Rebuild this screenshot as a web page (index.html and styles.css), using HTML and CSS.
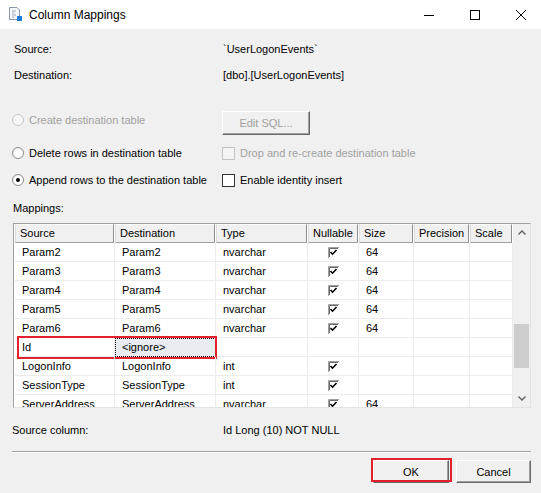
FILE: index.html
```html
<!DOCTYPE html>
<html lang="en">
<head>
  <meta charset="UTF-8">
  <meta name="viewport" content="width=device-width, initial-scale=1.0">
  <title>Column Mappings</title>
  <link rel="stylesheet" href="styles.css">
</head>
<body>
  <div class="titlebar">
    <svg class="app-icon" width="14" height="15" viewBox="0 0 14 15">
      <path d="M1.5 1.5h7.5l2.5 2.5v9.5h-10z" fill="#f5f7fa" stroke="#8797ad"/>
      <path d="M4 5h4M4 7h2.5M4 9h4M4 11h2.5" stroke="#9eabbd"/>
      <rect x="9" y="10" width="5" height="5" fill="#1f7bd8"/>
    </svg>
    <span class="title">Column Mappings</span>
    <div class="caption">
      <svg width="10" height="10" viewBox="0 0 10 10"><path d="M0 5.5h10" stroke="#000"/></svg>
      <svg width="10" height="10" viewBox="0 0 10 10"><rect x="0.5" y="0.5" width="9" height="9" fill="none" stroke="#000"/></svg>
      <svg width="10" height="10" viewBox="0 0 10 10"><path d="M0 0l10 10M10 0l-10 10" stroke="#000"/></svg>
    </div>
  </div>

  <div class="info">
    <span>Source:</span><span>`UserLogonEvents`</span>
    <span>Destination:</span><span>[dbo].[UserLogonEvents]</span>
  </div>

  <div class="options">
    <div class="opt disabled first"><span class="radio"></span>Create destination table</div>
    <div><button class="btn btn-sql" disabled>Edit SQL...</button></div>
    <div class="opt"><span class="radio"></span>Delete rows in destination table</div>
    <div class="opt disabled"><span class="check"></span>Drop and re-create destination table</div>
    <div class="opt"><span class="radio checked"></span>Append rows to the destination table</div>
    <div class="opt"><span class="check"></span>Enable identity insert</div>
  </div>

  <div class="section-label">Mappings:</div>
  <div class="grid">
    <div class="table">
      <div class="head">
        <div class="hcell">Source</div>
        <div class="hcell">Destination</div>
        <div class="hcell">Type</div>
        <div class="hcell">Nullable</div>
        <div class="hcell">Size</div>
        <div class="hcell">Precision</div>
        <div class="hcell">Scale</div>
      </div>
      <div class="row">
        <div class="cell">Param2</div><div class="cell">Param2</div><div class="cell">nvarchar</div>
        <div class="cell center"><svg class="cb" width="11" height="11" viewBox="0 0 11 11"><rect width="11" height="11" fill="#fff"/><path d="M0.5 11V0.5H11" fill="none" stroke="#a0a0a0"/><path d="M1.5 10V1.5H10" fill="none" stroke="#696969"/><path d="M2.5 5l2 2.2 4-4.2" fill="none" stroke="#000" stroke-width="1.6"/></svg></div>
        <div class="cell">64</div><div class="cell"></div><div class="cell"></div>
      </div>
      <div class="row">
        <div class="cell">Param3</div><div class="cell">Param3</div><div class="cell">nvarchar</div>
        <div class="cell center"><svg class="cb" width="11" height="11" viewBox="0 0 11 11"><rect width="11" height="11" fill="#fff"/><path d="M0.5 11V0.5H11" fill="none" stroke="#a0a0a0"/><path d="M1.5 10V1.5H10" fill="none" stroke="#696969"/><path d="M2.5 5l2 2.2 4-4.2" fill="none" stroke="#000" stroke-width="1.6"/></svg></div>
        <div class="cell">64</div><div class="cell"></div><div class="cell"></div>
      </div>
      <div class="row">
        <div class="cell">Param4</div><div class="cell">Param4</div><div class="cell">nvarchar</div>
        <div class="cell center"><svg class="cb" width="11" height="11" viewBox="0 0 11 11"><rect width="11" height="11" fill="#fff"/><path d="M0.5 11V0.5H11" fill="none" stroke="#a0a0a0"/><path d="M1.5 10V1.5H10" fill="none" stroke="#696969"/><path d="M2.5 5l2 2.2 4-4.2" fill="none" stroke="#000" stroke-width="1.6"/></svg></div>
        <div class="cell">64</div><div class="cell"></div><div class="cell"></div>
      </div>
      <div class="row">
        <div class="cell">Param5</div><div class="cell">Param5</div><div class="cell">nvarchar</div>
        <div class="cell center"><svg class="cb" width="11" height="11" viewBox="0 0 11 11"><rect width="11" height="11" fill="#fff"/><path d="M0.5 11V0.5H11" fill="none" stroke="#a0a0a0"/><path d="M1.5 10V1.5H10" fill="none" stroke="#696969"/><path d="M2.5 5l2 2.2 4-4.2" fill="none" stroke="#000" stroke-width="1.6"/></svg></div>
        <div class="cell">64</div><div class="cell"></div><div class="cell"></div>
      </div>
      <div class="row">
        <div class="cell">Param6</div><div class="cell">Param6</div><div class="cell">nvarchar</div>
        <div class="cell center"><svg class="cb" width="11" height="11" viewBox="0 0 11 11"><rect width="11" height="11" fill="#fff"/><path d="M0.5 11V0.5H11" fill="none" stroke="#a0a0a0"/><path d="M1.5 10V1.5H10" fill="none" stroke="#696969"/><path d="M2.5 5l2 2.2 4-4.2" fill="none" stroke="#000" stroke-width="1.6"/></svg></div>
        <div class="cell">64</div><div class="cell"></div><div class="cell"></div>
      </div>
      <div class="row marked">
        <div class="cell">Id</div><div class="cell focus">&lt;ignore&gt;</div><div class="cell"></div>
        <div class="cell"></div><div class="cell"></div><div class="cell"></div><div class="cell"></div>
        <span class="mark mark-row"></span>
      </div>
      <div class="row">
        <div class="cell">LogonInfo</div><div class="cell">LogonInfo</div><div class="cell">int</div>
        <div class="cell center"><svg class="cb" width="11" height="11" viewBox="0 0 11 11"><rect width="11" height="11" fill="#fff"/><path d="M0.5 11V0.5H11" fill="none" stroke="#a0a0a0"/><path d="M1.5 10V1.5H10" fill="none" stroke="#696969"/><path d="M2.5 5l2 2.2 4-4.2" fill="none" stroke="#000" stroke-width="1.6"/></svg></div>
        <div class="cell"></div><div class="cell"></div><div class="cell"></div>
      </div>
      <div class="row">
        <div class="cell">SessionType</div><div class="cell">SessionType</div><div class="cell">int</div>
        <div class="cell center"><svg class="cb" width="11" height="11" viewBox="0 0 11 11"><rect width="11" height="11" fill="#fff"/><path d="M0.5 11V0.5H11" fill="none" stroke="#a0a0a0"/><path d="M1.5 10V1.5H10" fill="none" stroke="#696969"/><path d="M2.5 5l2 2.2 4-4.2" fill="none" stroke="#000" stroke-width="1.6"/></svg></div>
        <div class="cell"></div><div class="cell"></div><div class="cell"></div>
      </div>
      <div class="row">
        <div class="cell">ServerAddress</div><div class="cell">ServerAddress</div><div class="cell">nvarchar</div>
        <div class="cell center"><svg class="cb" width="11" height="11" viewBox="0 0 11 11"><rect width="11" height="11" fill="#fff"/><path d="M0.5 11V0.5H11" fill="none" stroke="#a0a0a0"/><path d="M1.5 10V1.5H10" fill="none" stroke="#696969"/><path d="M2.5 5l2 2.2 4-4.2" fill="none" stroke="#000" stroke-width="1.6"/></svg></div>
        <div class="cell">64</div><div class="cell"></div><div class="cell"></div>
      </div>
    </div>
    <div class="scroll">
      <div class="arrow"><svg width="8" height="5" viewBox="0 0 8 5"><path d="M0.5 4.5l3.5-3.5 3.5 3.5" fill="none" stroke="#606060" stroke-width="1.4"/></svg></div>
      <div class="track"><div class="thumb"></div></div>
      <div class="arrow"><svg width="8" height="5" viewBox="0 0 8 5"><path d="M0.5 0.5l3.5 3.5 3.5-3.5" fill="none" stroke="#606060" stroke-width="1.4"/></svg></div>
    </div>
  </div>

  <div class="info source-col">
    <span>Source column:</span><span>Id Long (10) NOT NULL</span>
  </div>

  <div class="separator"></div>

  <div class="footer">
    <button class="btn btn-ok">OK<span class="mark"></span></button>
    <button class="btn btn-cancel">Cancel</button>
  </div>
</body>
</html>
```

FILE: styles.css
```css
body {
  margin: 0;
  width: 541px;
  height: 493px;
  overflow: hidden;
  background: #f0f0f0;
  color: #000;
  font-family: "Liberation Sans", Arial, sans-serif;
  font-size: 11px;
}
.titlebar {
  height: 29px;
  background: #fff;
  display: flex;
  align-items: center;
}
.app-icon {
  margin-left: 8px;
  margin-top: -2px;
}
.title {
  margin-left: 7px;
  font-size: 12px;
}
.caption {
  margin-left: auto;
  margin-right: 15px;
  display: flex;
  gap: 36px;
}
.info {
  display: grid;
  grid-template-columns: 209px auto;
  row-gap: 10px;
  line-height: 16px;
  padding-left: 14px;
  margin-top: 12px;
}
.options {
  display: grid;
  grid-template-columns: 210px auto;
  grid-template-rows: 25px 20px 20px;
  row-gap: 7px;
  margin: 28px 0 0 12px;
}
.opt {
  display: flex;
  align-items: center;
}
.opt.first {
  padding-bottom: 7px;
}
.opt.disabled {
  color: #a0a0a0;
}
.radio {
  width: 12px;
  height: 12px;
  box-sizing: border-box;
  border-radius: 50%;
  border: 1px solid #8c8c8c;
  background: radial-gradient(circle at 60% 60%, #fff 40%, #e6e6e6 100%);
  margin-right: 5px;
  display: flex;
  align-items: center;
  justify-content: center;
}
.disabled .radio {
  border-color: #c8c8c8;
  background: #f7f7f7;
}
.radio.checked::after {
  content: "";
  width: 4px;
  height: 4px;
  border-radius: 50%;
  background: #000;
}
.check {
  width: 13px;
  height: 13px;
  box-sizing: border-box;
  border: 1px solid #333;
  background: #fff;
  margin-right: 5px;
}
.disabled .check {
  border-color: #c2c2c2;
  background: #f4f4f4;
}
.btn {
  font-family: inherit;
  font-size: 11px;
  color: #000;
  height: 23px;
  padding: 0;
  box-sizing: border-box;
  background: #f0f0f0;
  border: 1px solid;
  border-color: #fff #696969 #696969 #fff;
  box-shadow: inset -1px -1px 0 #a0a0a0;
}
.btn-sql {
  width: 88px;
  height: 24px;
  color: #a0a0a0;
}
.section-label {
  margin: 10px 0 0 13px;
  line-height: 16px;
}
.grid {
  margin: 7px 0 0 13px;
  width: 518px;
  height: 185px;
  box-sizing: border-box;
  border: 1px solid;
  border-color: #a0a0a0 #e3e3e3 #e3e3e3 #a0a0a0;
  padding-left: 1px;
  background: #fff;
  display: flex;
}
.table {
  flex: 1;
  overflow: hidden;
}
.head, .row {
  display: grid;
  grid-template-columns: 100px 101px 92px 51px 55px 56px 43px;
}
.hcell {
  height: 19px;
  box-sizing: border-box;
  padding-left: 4px;
  line-height: 17px;
  background: #f0f0f0;
  border: 1px solid;
  border-color: #fcfcfc #8c8c8c #a0a0a0 #dcdcdc;
  margin-right: 1px;
}
.row {
  position: relative;
  height: 19px;
}
.cell {
  box-sizing: border-box;
  padding-left: 7px;
  line-height: 18px;
  border-right: 1px solid #ececec;
  border-bottom: 1px solid #ececec;
  white-space: nowrap;
  overflow: hidden;
}
.cell.center {
  padding-left: 0;
  display: flex;
  align-items: center;
  justify-content: center;
}
.cell.focus {
  background: #e8ecf0;
  outline: 1px dotted #000;
  outline-offset: -1px;
}
.mark {
  position: absolute;
  box-sizing: border-box;
  border: 2px solid #e3202b;
}
.mark-row {
  left: 2px;
  top: -2px;
  width: 200px;
  height: 23px;
}
.scroll {
  width: 17px;
  background: #f0f0f0;
  display: flex;
  flex-direction: column;
}
.arrow {
  height: 17px;
  display: flex;
  align-items: center;
  justify-content: center;
}
.track {
  flex: 1;
}
.thumb {
  margin: 83px 1px 0;
  height: 44px;
  background: #cdcdcd;
}
.source-col {
  margin-top: 14px;
  padding-left: 12px;
  grid-template-columns: 211px auto;
}
.separator {
  margin: 13px 10px 0 12px;
  border-top: 1px solid #a0a0a0;
  border-bottom: 1px solid #fff;
}
.footer {
  display: flex;
  justify-content: flex-end;
  gap: 7px;
  margin-top: 7px;
  padding-right: 10px;
}
.btn-ok {
  position: relative;
  width: 76px;
}
.btn-ok .mark {
  left: -3px;
  top: -3px;
  right: -4px;
  bottom: 0;
}
.btn-cancel {
  width: 75px;
}
```
